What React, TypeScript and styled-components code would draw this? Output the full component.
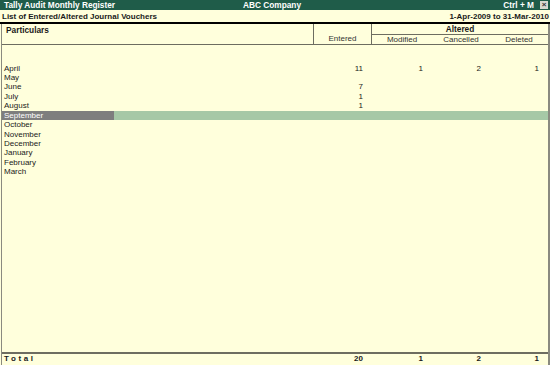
import styled, { createGlobalStyle } from "styled-components";

const GlobalStyle = createGlobalStyle`
  html, body {
    margin: 0;
    padding: 0;
    background: #ffffdc;
  }
  body {
    font-family: "Liberation Sans", Arial, sans-serif;
  }
`;

interface Month {
  name: string;
  entered?: number;
  modified?: number;
  cancelled?: number;
  deleted?: number;
  selected?: boolean;
}

const months: Month[] = [
  { name: "April", entered: 11, modified: 1, cancelled: 2, deleted: 1 },
  { name: "May" },
  { name: "June", entered: 7 },
  { name: "July", entered: 1 },
  { name: "August", entered: 1 },
  { name: "September", selected: true },
  { name: "October" },
  { name: "November" },
  { name: "December" },
  { name: "January" },
  { name: "February" },
  { name: "March" },
];

export default function App() {
  return (
    <>
      <GlobalStyle />
      <Screen>
        <TitleBar>
          <span>Tally Audit Monthly Register</span>
          <Company>ABC Company</Company>
          <Shortcut>
            Ctrl + M
            <CloseBox>×</CloseBox>
          </Shortcut>
        </TitleBar>
        <SubTitle>
          <span>List of Entered/Altered Journal Vouchers</span>
          <span>1-Apr-2009 to 31-Mar-2010</span>
        </SubTitle>
        <Frame>
          <HeadGrid>
            <HeadParticulars>Particulars</HeadParticulars>
            <HeadEntered>Entered</HeadEntered>
            <AlteredGroup>
              <AlteredTitle>Altered</AlteredTitle>
              <AlteredCols>
                <SubHead>Modified</SubHead>
                <SubHead>Cancelled</SubHead>
                <SubHead>Deleted</SubHead>
              </AlteredCols>
            </AlteredGroup>
          </HeadGrid>
          <Body>
            {months.map((m) => (
              <Row key={m.name} $selected={m.selected}>
                <Name $selected={m.selected}>{m.name}</Name>
                <Num>{m.entered ?? ""}</Num>
                <Num>{m.modified ?? ""}</Num>
                <Num>{m.cancelled ?? ""}</Num>
                <Num>{m.deleted ?? ""}</Num>
              </Row>
            ))}
          </Body>
          <TotalRow>
            <TotalLabel>Total</TotalLabel>
            <TotalNum>20</TotalNum>
            <TotalNum>1</TotalNum>
            <TotalNum>2</TotalNum>
            <TotalNum>1</TotalNum>
          </TotalRow>
        </Frame>
      </Screen>
    </>
  );
}

const COLS = "1fr 59px 60px 58px 58px";

const Screen = styled.div`
  width: 550px;
  height: 365px;
  display: flex;
  flex-direction: column;
  background: #ffffdc;
  color: #1a1a1a;
  font-size: 8px;
  overflow: hidden;
`;

const TitleBar = styled.div`
  height: 10px;
  background: #1f5c49;
  color: #ffffff;
  font-weight: bold;
  font-size: 8.3px;
  display: grid;
  grid-template-columns: 1fr auto 1fr;
  align-items: center;
  padding: 0 0 0 4px;
  line-height: 10px;
`;

const Company = styled.span`
  transform: translateX(-5px);
`;

const Shortcut = styled.span`
  display: flex;
  justify-content: flex-end;
  align-items: center;
  gap: 6px;
`;

const CloseBox = styled.span`
  width: 8px;
  height: 8px;
  background: #d8d8d0;
  color: #333;
  font-size: 8px;
  line-height: 8px;
  text-align: center;
  margin-right: 2px;
`;

const SubTitle = styled.div`
  height: 12px;
  display: flex;
  justify-content: space-between;
  align-items: center;
  padding: 0 1px 0 2px;
  font-weight: bold;
  font-size: 8px;
  border-bottom: 2px solid #000;
`;

const Frame = styled.div`
  flex: 1;
  display: flex;
  flex-direction: column;
  border-left: 1px solid #8a8a80;
  border-right: 2px solid #8a8a80;
  margin-left: 1px;
`;

const HeadGrid = styled.div`
  display: grid;
  grid-template-columns: 1fr 59px 176px;
  height: 20px;
  border-bottom: 1px solid #6d6d60;
`;

const HeadParticulars = styled.div`
  font-weight: bold;
  font-size: 8.3px;
  padding: 1px 0 0 4px;
`;

const HeadEntered = styled.div`
  border-left: 1px solid #6d6d60;
  border-right: 1px solid #6d6d60;
  display: flex;
  align-items: flex-end;
  justify-content: center;
  padding-bottom: 1px;
  color: #333;
`;

const AlteredGroup = styled.div`
  display: flex;
  flex-direction: column;
`;

const AlteredTitle = styled.div`
  height: 10px;
  font-weight: bold;
  font-size: 8.3px;
  text-align: center;
  line-height: 10px;
  border-bottom: 1px solid #6d6d60;
`;

const AlteredCols = styled.div`
  flex: 1;
  display: grid;
  grid-template-columns: 60px 58px 58px;
  align-items: center;
`;

const SubHead = styled.div`
  text-align: center;
  color: #333;
`;

const Body = styled.div`
  flex: 1;
  padding-top: 18.5px;
`;

const Row = styled.div<{ $selected?: boolean }>`
  display: grid;
  grid-template-columns: ${COLS};
  height: 9.45px;
  line-height: 9.45px;
  background: ${(p) => (p.$selected ? "#a6c8a6" : "transparent")};
`;

const Name = styled.div<{ $selected?: boolean }>`
  box-sizing: border-box;
  width: 112px;
  padding-left: 2px;
  background: ${(p) => (p.$selected ? "#7e7e7e" : "transparent")};
  color: ${(p) => (p.$selected ? "#ffffff" : "#1a1a1a")};
`;

const Num = styled.div`
  text-align: right;
  padding-right: 9px;
`;

const TotalRow = styled.div`
  display: grid;
  grid-template-columns: ${COLS};
  height: 10px;
  line-height: 10px;
  border-top: 2px solid #6d6d60;
  font-weight: bold;
  margin-bottom: 1px;
`;

const TotalLabel = styled.div`
  padding-left: 2px;
  letter-spacing: 2.6px;
`;

const TotalNum = styled.div`
  text-align: right;
  padding-right: 9px;
`;
